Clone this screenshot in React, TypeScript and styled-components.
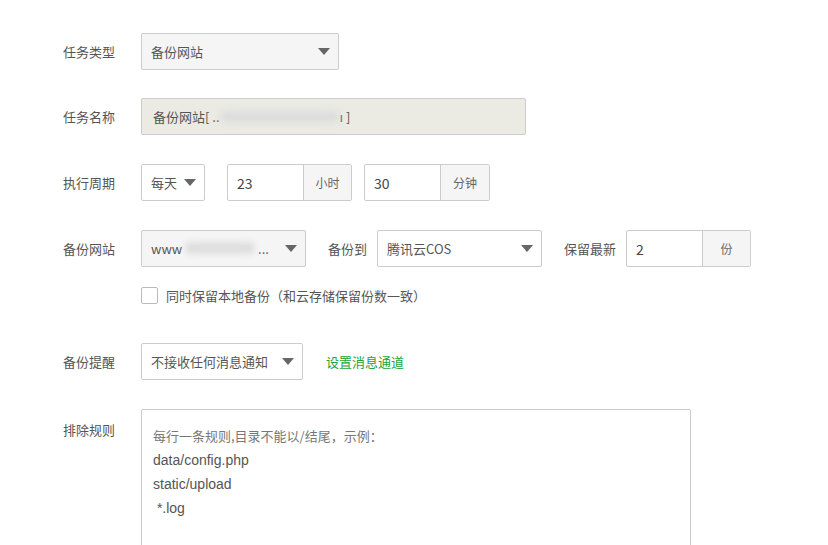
import styled, { createGlobalStyle } from 'styled-components';

const GlobalStyle = createGlobalStyle`
  html, body, #root { margin: 0; padding: 0; background: #fff; overflow: hidden; }
  body { font-family: "Microsoft YaHei", "Noto Sans CJK SC", "Liberation Sans", sans-serif; font-size: 13px; color: #555; }
`;

const Form = styled.div`
  padding: 33px 0 0 63px;
  display: flex;
  flex-direction: column;
`;

const Row = styled.div<{ $gap?: number }>`
  display: flex;
  align-items: center;
  height: 37px;
  margin-bottom: ${(p) => p.$gap ?? 29}px;
`;

const Label = styled.span<{ $w?: number }>`
  width: ${(p) => p.$w ?? 78}px;
  flex-shrink: 0;
  color: #555;
`;

const InlineLabel = styled.span<{ $ml: number; $mr: number }>`
  margin: 0 ${(p) => p.$mr}px 0 ${(p) => p.$ml}px;
  color: #555;
`;

const Select = styled.div<{ $w: number; $bg?: string; $ml?: number }>`
  box-sizing: border-box;
  width: ${(p) => p.$w}px;
  height: 37px;
  margin-left: ${(p) => p.$ml ?? 0}px;
  border: 1px solid #ccc;
  border-radius: 2px;
  background: ${(p) => p.$bg ?? '#fff'};
  display: flex;
  align-items: center;
  justify-content: space-between;
  padding: 0 8px 0 9px;
  color: #555;
  white-space: nowrap;
  overflow: hidden;
`;

const Caret = styled.span`
  width: 0;
  height: 0;
  border-left: 6px solid transparent;
  border-right: 6px solid transparent;
  border-top: 7px solid #666;
  flex-shrink: 0;
  margin-left: 2px;
`;

const TextBox = styled.div<{ $w: number; $bg?: string }>`
  box-sizing: border-box;
  width: ${(p) => p.$w}px;
  height: 37px;
  border: 1px solid #ccc;
  border-radius: 2px;
  background: ${(p) => p.$bg ?? '#fff'};
  display: flex;
  align-items: center;
  padding: 0 11px;
  color: #555;
`;

const Blur = styled.span<{ $w: number }>`
  display: inline-block;
  width: ${(p) => p.$w}px;
  height: 12px;
  background: #ddd;
  filter: blur(3px);
  border-radius: 6px;
`;

const Group = styled.div<{ $ml: number }>`
  display: flex;
  height: 37px;
  margin-left: ${(p) => p.$ml}px;
  border: 1px solid #ccc;
  border-radius: 2px;
  box-sizing: border-box;
`;

const GroupInput = styled.div`
  width: 75px;
  display: flex;
  align-items: center;
  padding-left: 9px;
  box-sizing: border-box;
  font-size: 14px;
  color: #444;
`;

const Addon = styled.div<{ $w: number }>`
  width: ${(p) => p.$w}px;
  background: #f5f5f5;
  border-left: 1px solid #ccc;
  display: flex;
  align-items: center;
  justify-content: center;
  font-size: 12px;
  color: #666;
`;

const CheckRow = styled.label`
  display: flex;
  align-items: center;
  margin: -10px 0 39px 78px;
  height: 18px;
  color: #555;
  gap: 8px;
`;

const Box = styled.span`
  width: 15px;
  height: 15px;
  border: 1px solid #bbb;
  border-radius: 2px;
  background: #fff;
`;

const Link = styled.a`
  color: #20a53a;
  margin-left: 23px;
  text-decoration: none;
`;

const AreaRow = styled.div`
  display: flex;
  align-items: flex-start;
`;

const Area = styled.div`
  box-sizing: border-box;
  width: 550px;
  height: 150px;
  border: 1px solid #ccc;
  border-radius: 2px;
  padding: 14px 11px;
  line-height: 24px;
  color: #555;
  font-size: 14px;
  font-family: "Liberation Sans", "Noto Sans CJK SC", sans-serif;
`;

const AreaLabel = styled(Label)`
  padding-top: 11px;
`;

export default function App() {
  return (
    <>
      <GlobalStyle />
      <Form>
        <Row $gap={28}>
          <Label>任务类型</Label>
          <Select $w={198} $bg="#f5f5f5">
            备份网站
            <Caret />
          </Select>
        </Row>
        <Row $gap={29}>
          <Label>任务名称</Label>
          <TextBox $w={385} $bg="#ebebe4">
            备份网站[ .. <Blur $w={120} /> ı ]
          </TextBox>
        </Row>
        <Row $gap={29}>
          <Label>执行周期</Label>
          <Select $w={64}>
            每天
            <Caret />
          </Select>
          <Group $ml={22}>
            <GroupInput>23</GroupInput>
            <Addon $w={47}>小时</Addon>
          </Group>
          <Group $ml={12}>
            <GroupInput>30</GroupInput>
            <Addon $w={48}>分钟</Addon>
          </Group>
        </Row>
        <Row>
          <Label>备份网站</Label>
          <Select $w={165} $bg="#f5f5f5">
            <span>
              www <Blur $w={70} /> ...
            </span>
            <Caret />
          </Select>
          <InlineLabel $ml={22} $mr={10}>备份到</InlineLabel>
          <Select $w={165}>
            腾讯云COS
            <Caret />
          </Select>
          <InlineLabel $ml={22} $mr={10}>保留最新</InlineLabel>
          <Group $ml={0}>
            <GroupInput>2</GroupInput>
            <Addon $w={47}>份</Addon>
          </Group>
        </Row>
        <CheckRow>
          <Box />
          同时保留本地备份（和云存储保留份数一致）
        </CheckRow>
        <Row $gap={29}>
          <Label>备份提醒</Label>
          <Select $w={162}>
            不接收任何消息通知
            <Caret />
          </Select>
          <Link>设置消息通道</Link>
        </Row>
        <AreaRow>
          <AreaLabel>排除规则</AreaLabel>
          <Area>
            <div style={{ color: '#777', fontFamily: '"Noto Sans CJK SC", sans-serif', fontSize: 13 }}>每行一条规则,目录不能以/结尾，示例：</div>
            <div>data/config.php</div>
            <div>static/upload</div>
            <div>&nbsp;*.log</div>
          </Area>
        </AreaRow>
      </Form>
    </>
  );
}
